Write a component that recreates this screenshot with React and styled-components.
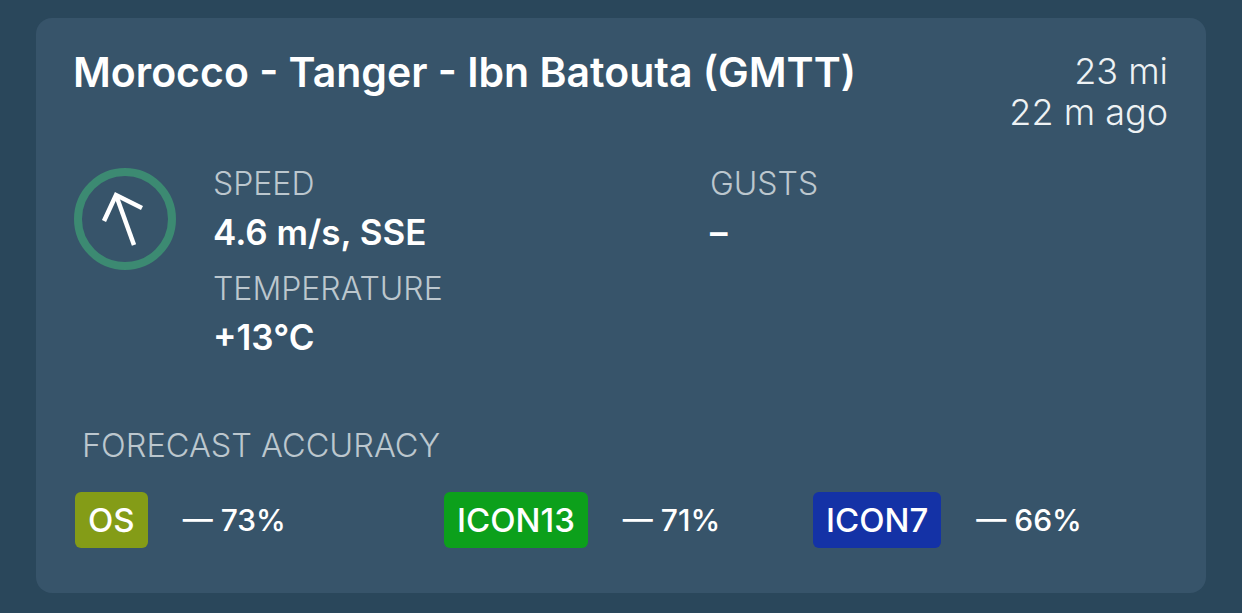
import React from 'react';
import styled, { createGlobalStyle } from 'styled-components';

const Global = createGlobalStyle`
  html, body {
    margin: 0;
    padding: 0;
    background: #2a475b;
    font-family: Inter, "Noto Sans", sans-serif;
  }
`

const Page = styled.div`
  width: 1242px;
  height: 613px;
  padding: 18px 36px 20px 36px;
  box-sizing: border-box;
`

const Card = styled.div`
  background: #37546a;
  border-radius: 16px;
  height: 575px;
  box-sizing: border-box;
  padding: 32px 38px 0 37px;
  color: #fff;
`

const Header = styled.div`
  display: flex;
  justify-content: space-between;
  align-items: flex-start;
`

const Title = styled.h1`
  margin: 0;
  font-size: 41px;
  font-weight: 600;
  line-height: 44px;
`

const Meta = styled.div`
  text-align: right;
  font-size: 36px;
  font-weight: 300;
  line-height: 41px;
  color: #eef2f4;
  margin-top: 1px;
`

const Body = styled.div`
  display: flex;
  align-items: flex-start;
  margin-top: 31px;
`

const Compass = styled.svg`
  width: 104px;
  height: 104px;
  flex: none;
  margin-top: 3px;
  margin-right: 36px;
`

const Stats = styled.div`
  display: grid;
  grid-template-columns: 497px 1fr;
  align-content: start;
`

const Stat = styled.div`
  display: flex;
  flex-direction: column;
  margin-bottom: 9px;
`

const Label = styled.div`
  font-size: ${p => p.size || 32}px;
  font-weight: 300;
  line-height: 40px;
  color: #bcc7ce;
  text-transform: uppercase;
`

const Value = styled.div`
  font-size: 35px;
  font-weight: 600;
  line-height: 56px;
`

const Section = styled.div`
  margin-top: 52px;
  padding-left: 2px;
`

const SectionLabel = styled(Label)`
  padding-left: 7px;
`

const Models = styled.div`
  display: grid;
  grid-template-columns: repeat(3, 369px);
  margin-top: 26px;
`

const Model = styled.div`
  display: flex;
  align-items: center;
  gap: 35px;
`

const Badge = styled.span`
  display: inline-flex;
  align-items: center;
  height: 56px;
  padding: 0 13px;
  border-radius: 6px;
  background: ${p => p.color};
  font-size: 33px;
  font-weight: 500;
`

const Score = styled.span`
  font-size: 30px;
  font-weight: 500;
`

const models = [
  { name: 'OS', color: '#849c17', score: '73%' },
  { name: 'ICON13', color: '#0ca01b', score: '71%' },
  { name: 'ICON7', color: '#1432a6', score: '66%' },
];

export default function App() {
  return (
    <Page>
      <Global />
      <Card>
        <Header>
          <Title>Morocco - Tanger - Ibn Batouta (GMTT)</Title>
          <Meta>
            <div>23 mi</div>
            <div>22 m ago</div>
          </Meta>
        </Header>
        <Body>
          <Compass viewBox="0 0 104 104">
            <circle cx="52" cy="52" r="47" fill="none" stroke="#3c8a72" strokeWidth="8" />
            <g stroke="#fff" strokeWidth="4.5" fill="none" strokeLinecap="butt">
              <line x1="61" y1="78" x2="43" y2="28" />
              <polyline points="31,54 43,28 69,41" />
            </g>
          </Compass>
          <Stats>
            <Stat>
              <Label>Speed</Label>
              <Value>4.6 m/s, SSE</Value>
            </Stat>
            <Stat>
              <Label>Gusts</Label>
              <Value>–</Value>
            </Stat>
            <Stat>
              <Label>Temperature</Label>
              <Value>+13°C</Value>
            </Stat>
          </Stats>
        </Body>
        <Section>
          <SectionLabel size={32.5}>Forecast accuracy</SectionLabel>
          <Models>
            {models.map(m => (
              <Model key={m.name}>
                <Badge color={m.color}>{m.name}</Badge>
                <Score>— {m.score}</Score>
              </Model>
            ))}
          </Models>
        </Section>
      </Card>
    </Page>
  );
}
